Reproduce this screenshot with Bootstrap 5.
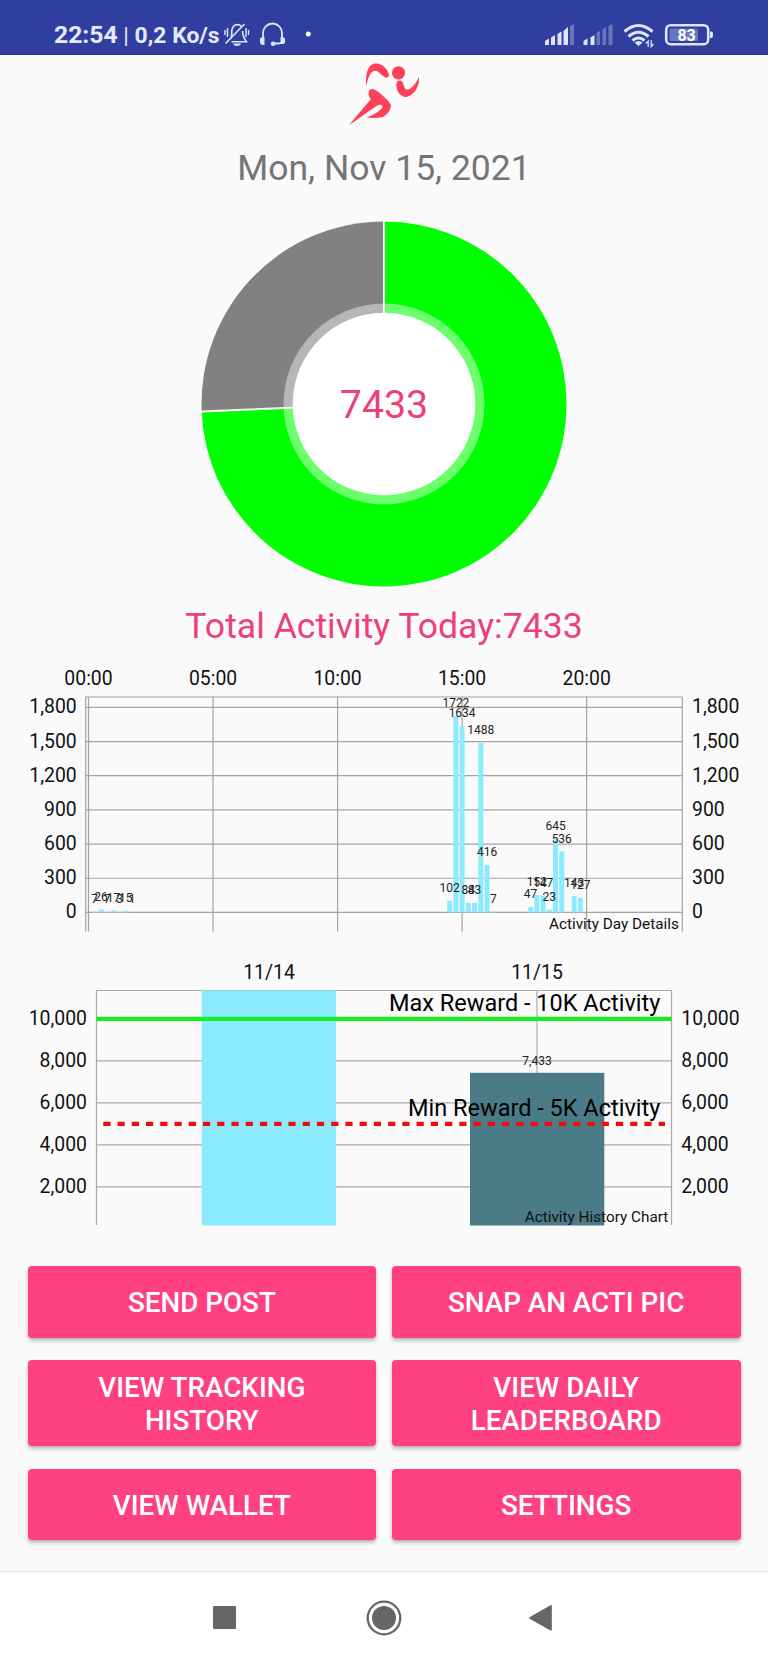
<!DOCTYPE html>
<html lang="en">
<head>
<meta charset="utf-8">
<meta name="viewport" content="width=device-width, initial-scale=1">
<title>Activity tracker</title>
<link href="https://cdn.jsdelivr.net/npm/bootstrap@5.3.0/dist/css/bootstrap.min.css" rel="stylesheet">
<style>
body{background:#fafafa;font-family:Roboto,"Liberation Sans",sans-serif;min-height:1664px;line-height:1}
.status-bar{background:#303f9f;height:55px;color:#e6e9fb;padding:15px 55px 0 54px;border-bottom:1px solid #283593}
.clock{font-size:24.7px;font-weight:700;line-height:40px;white-space:pre;width:165px}
.rate{font-size:22.9px}
.thin-bar{font-weight:400}
.date-line{font-size:35.5px;color:#757575;height:54px;line-height:56px}
.total-line{font-size:35.6px;color:#ec407a;height:46px;line-height:48px}
svg{display:block}
svg text{font-family:Roboto,"Liberation Sans",sans-serif}
.axis-text{font-size:19.4px;fill:#111}
.bar-text{font-size:12px;fill:#222;text-anchor:middle}
.actions{padding:21px 27.5px 0 27.5px;row-gap:22.5px;column-gap:15.5px;display:grid;grid-template-columns:1fr 1fr;grid-template-rows:71.5px 86px 71.5px}
.btn-action{--bs-btn-bg:#ff4081;--bs-btn-color:#fff;background:#ff4081;color:#fff;border:0;border-radius:4px;font-size:27.8px;font-weight:500;line-height:33px;padding:2px 50px 0;box-shadow:0 3px 4px rgba(0,0,0,.22),0 1px 2px rgba(0,0,0,.1)}
.nav-keys{height:93px;background:#fff;border-top:1px solid #e4e4e4}
</style>
</head>
<body>
<div class="d-flex flex-column" style="height:1664px">
<header class="status-bar d-flex justify-content-between flex-shrink-0">
  <div class="d-flex">
    <div class="clock">22:54<span class="thin-bar rate"> | </span><span class="rate">0,2 Ko/s</span></div>
    <svg class="ms-1" width="96" height="38" viewBox="223 15 96 38" fill="none" stroke="#dfe3fb" stroke-width="1.6">
      <path d="M230.500 39Q232 36.500 231.800 31C232 27 234 25 237 24.500C239 24.500 240.500 25.200 241.500 26.500M242.600 31Q242.600 36.500 246.500 41.800H231.500M225.500 43.500L244.500 24"/>
      <path d="M233 43.500H241Q240 46 237 46Q234 46 233 43.500Z" fill="#dfe3fb" stroke="none"/>
      <path d="M225 30V35M227.500 28V37M246 28V37M248.500 30V35" stroke-width="1.400"/>
      <path d="M263 39V33A9.500 9.500 0 0 1 282 33V41Q282 43.500 278 43.500H273" stroke-width="1.800"/>
      <path d="M260 39Q260 37 264.500 37V45Q260 45.500 260 42ZM285 39Q285 37 280.500 37V44Q285 44.500 285 42Z" fill="#dfe3fb" stroke="none"/>
      <circle cx="273" cy="43.700" r="2.200" fill="#dfe3fb" stroke="none"/>
      <circle cx="308.300" cy="34" r="2.500" fill="#fff" stroke="none"/>
    </svg>
  </div>
  <svg width="170" height="38" viewBox="543 15 170 38" fill="#dfe3fb">
    <path d="M545 41L549 38.500V45H545ZM551 37.500L555 35V45H551ZM557.500 34L561.500 31.500V45H557.500ZM563.500 31L568 27V45H563.500Z"/>
    <path d="M570 26L574 24V45H570ZM596.500 33L600 30.500V45H596.500ZM602.500 29.500L606 27V45H602.500ZM608.500 26L612.500 24V45H608.500Z" opacity=".33"/>
    <path d="M583.500 41L587.500 38.500V45H583.500ZM590.500 37.500L594.500 35V45H590.500Z"/>
    <g fill="none" stroke="#dfe3fb" stroke-width="3"><path d="M624.500 31.500Q638.500 19.500 652.500 31.500"/><path d="M628.500 36.500Q638.500 28 648.500 36.500"/><path d="M632.500 40.500Q638.500 35.500 644.500 40.500"/></g>
    <path d="M634.500 42.500Q638.500 39.500 642.500 42.500L638.500 46Z"/>
    <path d="M648.200 47V41L645.800 43.500M651.200 40V46.500L653.500 44" fill="none" stroke="#dfe3fb" stroke-width="1.300"/>
    <rect x="666.200" y="25.200" width="42" height="19" rx="4.500" fill="none" stroke="#dfe3fb" stroke-width="2.600"/>
    <rect x="669.500" y="28.500" width="28.500" height="12.500" rx="1.500" opacity=".33"/>
    <path d="M710 31.500H711.500Q713 31.500 713 34.500Q713 38 711.500 38H710Z"/>
    <text x="686.600" y="40.500" text-anchor="middle" font-size="16" font-weight="700" fill="#fff">83</text>
  </svg>
</header>

<main class="flex-grow-1 text-center">
  <svg class="mx-auto" width="80" height="85" viewBox="344 55 80 85" fill="#ff4056">
    <path d="M366.500 86C365 74 368 63.500 376 63.500C383 63.500 387 69 389 74C389 77.500 387 78.500 384.500 77L377 71C371 69 368 77 366.500 86Z"/>
    <circle cx="398.500" cy="72.800" r="6.600"/>
    <path d="M396.500 83C397 80 401 79.500 402.500 82L405 88.500C407 91.500 413 89 419 77C420 88 412 97 405 97C399 96 395.500 89 396.500 83Z"/>
    <path d="M349 125L371 99C368.500 97 367.500 92.500 370 89.800C372 87.500 377 90 382 95C386 98.500 390 102 391 105.500C391 109 388 114 383 117Q376 118.500 366.500 117.500C372 116 380 111 382.500 107.500C383 104.500 380 104 376.500 106C367 112 359 119 349 125Z"/>
  </svg>
  <div class="date-line">Mon, Nov 15, 2021</div>
  <svg width="768" height="408" viewBox="0 194 768 408">
    <path d="M384 404V221.500A182.500 182.500 0 1 1 201.640 411.200Z" fill="#0f0"/>
    <path d="M384 404V221.500A182.500 182.500 0 0 0 201.640 411.200Z" fill="#818181"/>
    <path d="M384 404V221M384 404L201.200 411.500" stroke="#fafafa" stroke-width="2"/>
    <circle cx="384" cy="404" r="100.500" fill="#fff" fill-opacity=".42"/>
    <circle cx="384" cy="404" r="91.300" fill="#fff"/>
    <text x="384" y="418" text-anchor="middle" font-size="39.300" fill="#ec407a">7433</text>
  </svg>
  <div class="total-line">Total Activity Today:7433</div>
  <svg id="dayChart" width="768" height="302" viewBox="0 648 768 302"></svg>
  <svg id="historyChart" width="768" height="295" viewBox="0 950 768 295"></svg>
  <div class="actions">
    <button class="btn btn-action">SEND POST</button>
    <button class="btn btn-action">SNAP AN ACTI PIC</button>
    <button class="btn btn-action">VIEW TRACKING HISTORY</button>
    <button class="btn btn-action">VIEW DAILY LEADERBOARD</button>
    <button class="btn btn-action">VIEW WALLET</button>
    <button class="btn btn-action">SETTINGS</button>
  </div>
</main>

<footer class="nav-keys flex-shrink-0">
  <svg width="768" height="92" viewBox="0 1572 768 92" fill="#666">
    <rect x="213" y="1606" width="23" height="23" rx="1"/>
    <circle cx="384" cy="1618" r="16.300" fill="none" stroke="#666" stroke-width="2.300"/>
    <circle cx="384" cy="1618" r="12"/>
    <path d="M529.500 1617.200L550.500 1605.200Q551.800 1604.800 551.800 1606V1629.800Q551.800 1631 550.500 1630.400L529.500 1618.800Q528.600 1618 529.500 1617.200Z"/>
  </svg>
</footer>
</div>

<script src="https://cdn.jsdelivr.net/npm/bootstrap@5.3.0/dist/js/bootstrap.bundle.min.js"></script>
<script>
const line = (x1, y1, x2, y2, c) => `<path d="M${x1} ${y1}L${x2} ${y2}" stroke="${c}" stroke-width="1.2"/>`;
const text = (x, y, s, cls, extra = '') => `<text x="${x}" y="${y}" class="${cls}" ${extra}>${s}</text>`;

// Steps per quarter of an hour
const slots = {1:7,2:26,3:7,4:17,5:3,6:15,7:1,58:102,59:1722,60:1634,61:84,62:83,63:1488,64:416,65:7,
  71:47,72:152,73:147,74:23,75:645,76:536,78:143,79:127};
const y0 = 912.4, unit = 0.1139, x0 = 88.5, step = 6.227;
let day = '';
for (let v = 0; v <= 1800; v += 300) {
  const y = y0 - v * unit, label = v.toLocaleString('en-US');
  day += line(86, y, 682, y, '#a2a2a2') + text(76.7, y + 6, label, 'axis-text', 'text-anchor="end"') + text(692, y + 6, label, 'axis-text');
}
for (let h = 0; h <= 20; h += 5) {
  const x = x0 + h * 4 * step;
  day += line(x, 697, x, 931.500, '#a2a2a2') + text(x, 684.5, String(h).padStart(2, '0') + ':00', 'axis-text', 'text-anchor="middle"');
}
day += line(85.7, 697, 682.300, 697, '#a2a2a2') + line(85.7, 697, 85.7, 931.500, '#a2a2a2') + line(682.300, 697, 682.300, 931.500, '#a2a2a2');
for (const [s, v] of Object.entries(slots))
  day += `<rect x="${x0 + s * step - 2.500}" y="${y0 - v * unit}" width="5" height="${v * unit}" fill="#8ceaff"/>`;
for (const [s, v] of Object.entries(slots))
  day += text(x0 + s * step, y0 - v * unit - 8.8, v, 'bar-text');
day += text(678.900, 928.7, 'Activity Day Details', '', 'text-anchor="end" font-size="15.300" fill="#111"');
document.getElementById('dayChart').innerHTML = day;

let hist = line(96.500, 990.500, 671.500, 990.500, '#aaa') + line(96.500, 990, 96.500, 1225, '#aaa') +
  line(671.500, 990, 671.500, 1225, '#aaa') + line(537, 990, 537, 1075, '#aaa');
for (let v = 2000; v <= 10000; v += 2000) {
  const y = 1228.8 - v * 0.021, label = v.toLocaleString('en-US');
  hist += line(96.500, y, 671.500, y, '#aaa') + text(87, y + 5.7, label, 'axis-text', 'text-anchor="end"') + text(681.3, y + 5.7, label, 'axis-text');
}
hist += `<rect x="201.700" y="990.500" width="134.300" height="235" fill="#8ceaff"/><rect x="470" y="1072.800" width="134.300" height="152.700" fill="#4a7b86"/>`;
hist += text(269, 978.6, '11/14', 'axis-text', 'text-anchor="middle"') + text(537, 978.6, '11/15', 'axis-text', 'text-anchor="middle"');
hist += text(537, 1064.500, '7,433', 'bar-text');
hist += '<path d="M96.500 1018.800H671.500" stroke="#16ee22" stroke-width="4.300"/><path d="M103.300 1123.900H665" stroke="#ee0c0c" stroke-width="4.200" stroke-dasharray="7.200 7.040"/>';
hist += text(660.3, 1011, 'Max Reward - 10K Activity', '', 'text-anchor="end" font-size="23.500"') +
  text(660.3, 1116, 'Min Reward - 5K Activity', '', 'text-anchor="end" font-size="23.500"') +
  text(668.3, 1222, 'Activity History Chart', '', 'text-anchor="end" font-size="15.300" fill="#111"');
document.getElementById('historyChart').innerHTML = hist;
</script>
</body>
</html>
